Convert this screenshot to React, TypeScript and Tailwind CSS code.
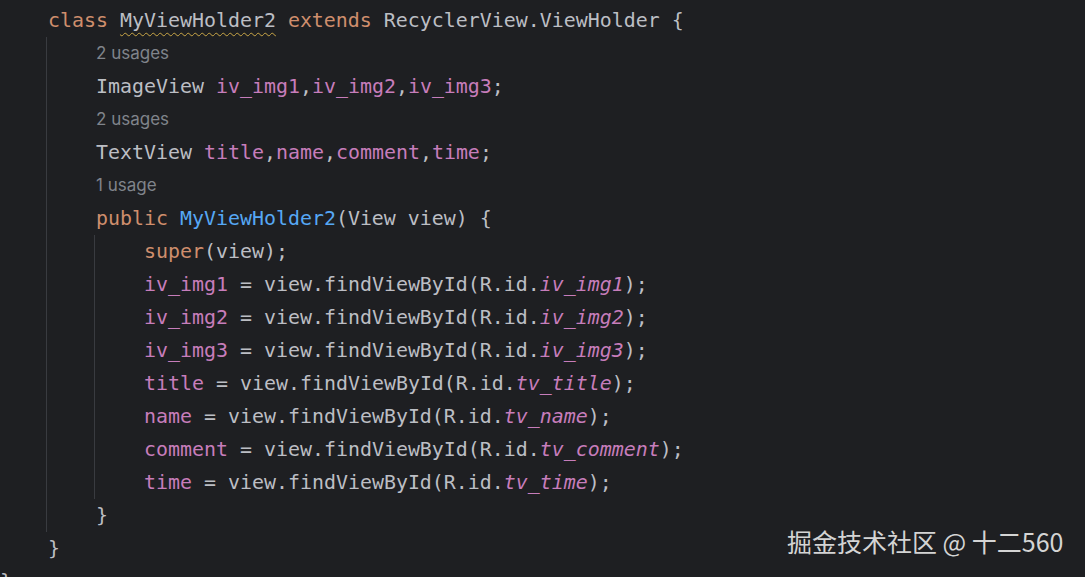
const KW = "text-[#cf8e6d]";
const FIELD = "text-[#c77dbb]";
const CONST = "text-[#c77dbb] italic";

type Seg = [string, string?];

function Code({ segs }: { segs: Seg[] }) {
  return (
    <div className="h-[33px] leading-[33px] whitespace-pre">
      {segs.map(([text, cls], i) => (
        <span key={i} className={cls}>
          {text}
        </span>
      ))}
    </div>
  );
}

function Hint({ text }: { text: string }) {
  return (
    <div className="h-[33px] leading-[33px] text-[17px] text-[#80848b] font-['Inter','Noto_Sans',sans-serif]">
      {text}
    </div>
  );
}

const assigns: [string, string][] = [
  ["iv_img1", "iv_img1"],
  ["iv_img2", "iv_img2"],
  ["iv_img3", "iv_img3"],
  ["title", "tv_title"],
  ["name", "tv_name"],
  ["comment", "tv_comment"],
  ["time", "tv_time"],
];

export default function App() {
  return (
    <div className="relative w-[1085px] h-[577px] overflow-hidden bg-[#1e1f22] text-[#bcbec4] text-[19.93px] font-['DejaVu_Sans_Mono','Liberation_Mono',monospace] pt-[4px]">
      <div className="pl-[48px]">
        <Code
          segs={[
            ["class ", KW],
            ["MyViewHolder2", "underline decoration-wavy decoration-[#c9a646] decoration-1 underline-offset-[5px]"],
            [" extends ", KW],
            ["RecyclerView.ViewHolder {"],
          ]}
        />
      </div>

      {/* class body */}
      <div className="ml-[46px] border-l border-[#393b40]">
        <div className="pl-[49px]">
          <Hint text="2 usages" />
          <Code segs={[["ImageView "], ["iv_img1", FIELD], [","], ["iv_img2", FIELD], [","], ["iv_img3", FIELD], [";"]]} />
          <Hint text="2 usages" />
          <Code segs={[["TextView "], ["title", FIELD], [","], ["name", FIELD], [","], ["comment", FIELD], [","], ["time", FIELD], [";"]]} />
          <Hint text="1 usage" />
          <Code segs={[["public ", KW], ["MyViewHolder2", "text-[#56a8f5]"], ["(View view) {"]]} />
        </div>

        {/* constructor body */}
        <div className="ml-[47px] border-l border-[#393b40] pl-[49px]">
          <Code segs={[["super", KW], ["(view);"]]} />
          {assigns.map(([f, id]) => (
            <Code key={id} segs={[[f, FIELD], [" = view.findViewById(R.id."], [id, CONST], [");"]]} />
          ))}
        </div>

        <div className="pl-[49px]">
          <Code segs={[["}"]]} />
        </div>
      </div>

      <div className="pl-[48px]">
        <Code segs={[["}"]]} />
      </div>
      <Code segs={[["}"]]} />

      <div className="absolute left-[787px] top-[522px] text-[25px] leading-[38px] text-[#d4d4d4] font-['Noto_Sans_CJK_SC','Noto_Sans',sans-serif]">
        掘金技术社区 @ 十二560
      </div>
    </div>
  );
}
